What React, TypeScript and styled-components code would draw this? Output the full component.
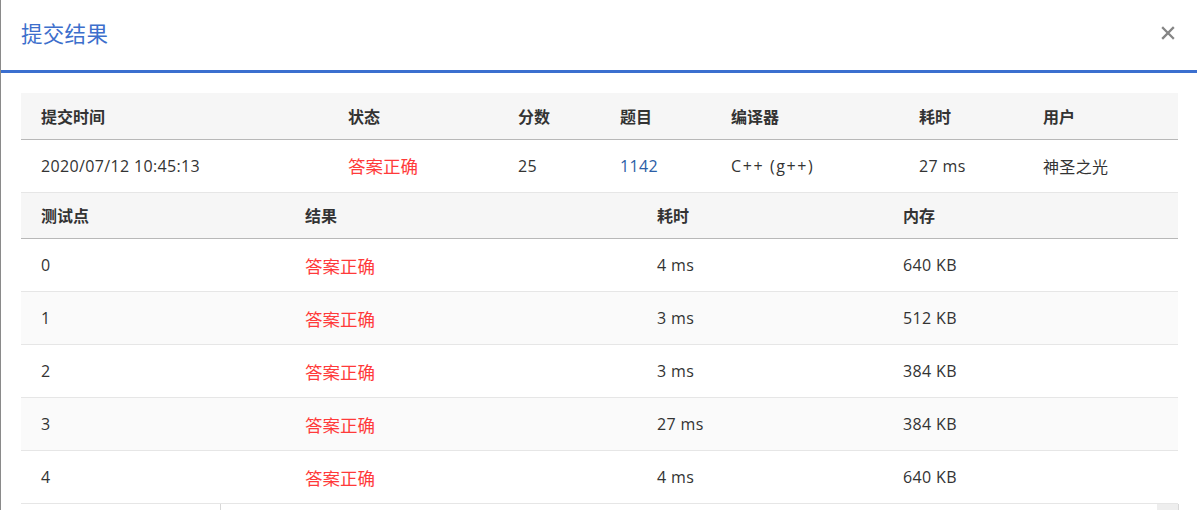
import React from "react";
import styled, { createGlobalStyle } from "styled-components";

const Global = createGlobalStyle`
  html, body { margin: 0; padding: 0; background: #fff; }
  body { font-family: "Open Sans", "Noto Sans CJK SC", sans-serif; color: #333; }
`;

const Modal = styled.div`
  width: 1196px;
  height: 510px;
  border-left: 1px solid #8a8a8a;
  background: #fff;
  overflow: hidden;
`;

const Header = styled.div`
  height: 70px;
  display: flex;
  align-items: center;
  justify-content: space-between;
  padding: 0 22px 0 20px;
  border-bottom: 3px solid #3b6fcf;
`;

const Title = styled.h3`
  margin: 0;
  font-size: 21.5px;
  font-weight: 400;
  color: #3d6fcc;
  letter-spacing: 0.3px;
  line-height: 1;
  padding-bottom: 2px;
`;

const Close = styled.button`
  border: 0;
  background: none;
  padding: 0;
  width: 14px;
  height: 14px;
  display: flex;
  cursor: pointer;
  margin-bottom: 4px;
`;

const Body = styled.div`
  padding: 20px 19px 0 20px;
`;

const Table = styled.table`
  width: 1157px;
  border-collapse: collapse;
  table-layout: fixed;
`;

const HeadCell = styled.th`
  height: 46px;
  box-sizing: border-box;
  padding: 0 0 0 20px;
  text-align: left;
  font-weight: 700;
  font-size: 16px;
  color: #333;
  background: #f6f6f6;
  border-bottom: 1px solid #b8b8b8;
`;

const Row = styled.tr<{ $striped?: boolean }>`
  background: ${(p) => (p.$striped ? "#fafafa" : "#fff")};
`;

const Cell = styled.td<{ $tone?: "red" | "blue"; $spaced?: boolean }>`
  height: 53px;
  box-sizing: border-box;
  padding: 0 0 0 20px;
  border-bottom: 1px solid #e6e6e6;
  color: ${(p) => (p.$tone === "red" ? "#ff3a3a" : p.$tone === "blue" ? "#2b5ea6" : "#333")};
  font-size: ${(p) => (p.$tone === "red" ? "17.5px" : "16px")};
  letter-spacing: ${(p) => (p.$spaced ? "1.6px" : p.$tone === "red" ? "0" : "0.35px")};
  white-space: nowrap;
`;

const Scroll = styled.div`
  margin-left: 199px;
  width: 958px;
  height: 6px;
  border-left: 1px solid #d8d8d8;
  display: flex;
  justify-content: flex-end;
`;

const Thumb = styled.div`
  width: 21px;
  height: 6px;
  background: #eeeeee;
  border-right: 1px solid #d8d8d8;
`;

const summaryCols = [307, 170, 102, 111, 188, 124, 155];
const summaryHead = ["提交时间", "状态", "分数", "题目", "编译器", "耗时", "用户"];

const caseCols = [264, 352, 246, 295];
const caseHead = ["测试点", "结果", "耗时", "内存"];
const cases = [
  ["0", "4 ms", "640 KB"],
  ["1", "3 ms", "512 KB"],
  ["2", "3 ms", "384 KB"],
  ["3", "27 ms", "384 KB"],
  ["4", "4 ms", "640 KB"],
];

export default function App() {
  return (
    <>
      <Global />
      <Modal>
        <Header>
          <Title>提交结果</Title>
          <Close aria-label="close">
            <svg width="14" height="14" viewBox="0 0 14 14">
              <path d="M2 2 L12 12 M12 2 L2 12" stroke="#858585" strokeWidth="2.3" strokeLinecap="square" />
            </svg>
          </Close>
        </Header>
        <Body>
          <Table>
            <colgroup>
              {summaryCols.map((w, i) => (
                <col key={i} style={{ width: w }} />
              ))}
            </colgroup>
            <thead>
              <tr>
                {summaryHead.map((h) => (
                  <HeadCell key={h}>{h}</HeadCell>
                ))}
              </tr>
            </thead>
            <tbody>
              <Row>
                <Cell>2020/07/12 10:45:13</Cell>
                <Cell $tone="red">答案正确</Cell>
                <Cell>25</Cell>
                <Cell $tone="blue">1142</Cell>
                <Cell $spaced>C++ (g++)</Cell>
                <Cell>27 ms</Cell>
                <Cell>神圣之光</Cell>
              </Row>
            </tbody>
          </Table>
          <Table>
            <colgroup>
              {caseCols.map((w, i) => (
                <col key={i} style={{ width: w }} />
              ))}
            </colgroup>
            <thead>
              <tr>
                {caseHead.map((h) => (
                  <HeadCell key={h}>{h}</HeadCell>
                ))}
              </tr>
            </thead>
            <tbody>
              {cases.map(([id, time, mem], i) => (
                <Row key={id} $striped={i % 2 === 1}>
                  <Cell>{id}</Cell>
                  <Cell $tone="red">答案正确</Cell>
                  <Cell>{time}</Cell>
                  <Cell>{mem}</Cell>
                </Row>
              ))}
            </tbody>
          </Table>
          <Scroll>
            <Thumb />
          </Scroll>
        </Body>
      </Modal>
    </>
  );
}
